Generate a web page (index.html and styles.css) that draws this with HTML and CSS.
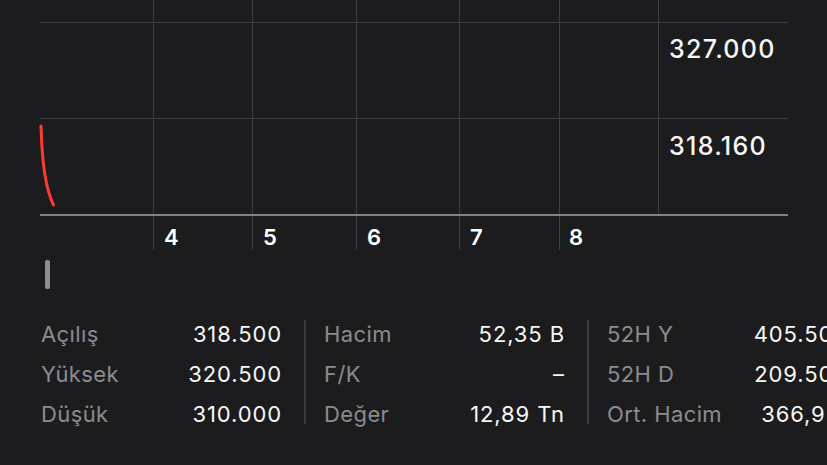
FILE: index.html
```html
<!DOCTYPE html>
<html lang="tr">
<head>
<meta charset="utf-8">
<title>Grafik</title>
<link rel="stylesheet" href="styles.css">
</head>
<body>
<div class="screen">
  <svg class="chart" width="827" height="252" viewBox="0 0 827 252">
    <g class="grid">
      <line x1="40" y1="22.5" x2="788" y2="22.5"/>
      <line x1="40" y1="118.5" x2="788" y2="118.5"/>
      <line x1="153.5" y1="0" x2="153.5" y2="250"/>
      <line x1="252.5" y1="0" x2="252.5" y2="250"/>
      <line x1="356.5" y1="0" x2="356.5" y2="250"/>
      <line x1="459.5" y1="0" x2="459.5" y2="250"/>
      <line x1="559.5" y1="0" x2="559.5" y2="250"/>
      <line x1="658.5" y1="0" x2="658.5" y2="215"/>
    </g>
    <line class="axis" x1="40" y1="215" x2="788" y2="215"/>
    <path class="price" d="M41 126 C42 165 46 190 53.5 205"/>
    <text class="ylabel" x="669" y="58">327.000</text>
    <text class="ylabel" x="669" y="155">318.160</text>
    <text class="xlabel" x="164" y="245">4</text>
    <text class="xlabel" x="263" y="245">5</text>
    <text class="xlabel" x="367" y="245">6</text>
    <text class="xlabel" x="470" y="245">7</text>
    <text class="xlabel" x="569" y="245">8</text>
  </svg>
  <div class="handle"></div>
  <div class="stats">
    <div class="col">
      <div class="row"><span class="label">Açılış</span><span class="value">318.500</span></div>
      <div class="row"><span class="label">Yüksek</span><span class="value">320.500</span></div>
      <div class="row"><span class="label">Düşük</span><span class="value">310.000</span></div>
    </div>
    <div class="divider"></div>
    <div class="col">
      <div class="row"><span class="label">Hacim</span><span class="value">52,35 B</span></div>
      <div class="row"><span class="label">F/K</span><span class="value">–</span></div>
      <div class="row"><span class="label">Değer</span><span class="value">12,89 Tn</span></div>
    </div>
    <div class="divider"></div>
    <div class="col">
      <div class="row"><span class="label">52H Y</span><span class="value">405.500</span></div>
      <div class="row"><span class="label">52H D</span><span class="value">209.500</span></div>
      <div class="row"><span class="label">Ort. Hacim</span><span class="value">366,9 B</span></div>
    </div>
  </div>
</div>
</body>
</html>
```
FILE: styles.css
```css
html, body {
  margin: 0;
  padding: 0;
  background: #1c1c1e;
}
body {
  width: 827px;
  height: 465px;
  overflow: hidden;
  font-family: Inter, "Noto Sans", "Liberation Sans", sans-serif;
}
.screen {
  width: 827px;
  height: 465px;
  overflow: hidden;
  display: flex;
  flex-direction: column;
  background: #1c1c1e;
}
.chart {
  display: block;
  flex: none;
}
.grid line {
  stroke: #3d3d40;
  stroke-width: 1;
}
.axis {
  stroke: #a3a3a6;
  stroke-width: 1.5;
}
.price {
  fill: none;
  stroke: #ff3b30;
  stroke-width: 3;
  stroke-linecap: round;
}
.ylabel {
  fill: #f5f5f5;
  font-family: Inter, "Noto Sans", sans-serif;
  font-size: 25px;
  font-weight: 500;
  letter-spacing: 1.3px;
}
.xlabel {
  fill: #ffffff;
  font-family: Inter, "Noto Sans", sans-serif;
  font-size: 22px;
  font-weight: 600;
}
.handle {
  flex: none;
  width: 5px;
  height: 29px;
  margin: 8px 0 0 45px;
  border-radius: 2px;
  background: #8e8e92;
}
.stats {
  flex: none;
  display: flex;
  margin-top: 25px;
  padding-left: 41px;
}
.col {
  flex: none;
  width: 241px;
  display: flex;
  flex-direction: column;
}
.row {
  height: 40px;
  display: flex;
  align-items: center;
  justify-content: space-between;
  font-size: 22px;
  white-space: nowrap;
}
.label {
  color: #8b8b90;
  letter-spacing: 0.4px;
}
.value {
  color: #f7f7f7;
  letter-spacing: 0.9px;
}
.divider {
  flex: none;
  width: 2px;
  margin: 6px 18px 10px 22px;
  background: #3a3a3d;
}
```
